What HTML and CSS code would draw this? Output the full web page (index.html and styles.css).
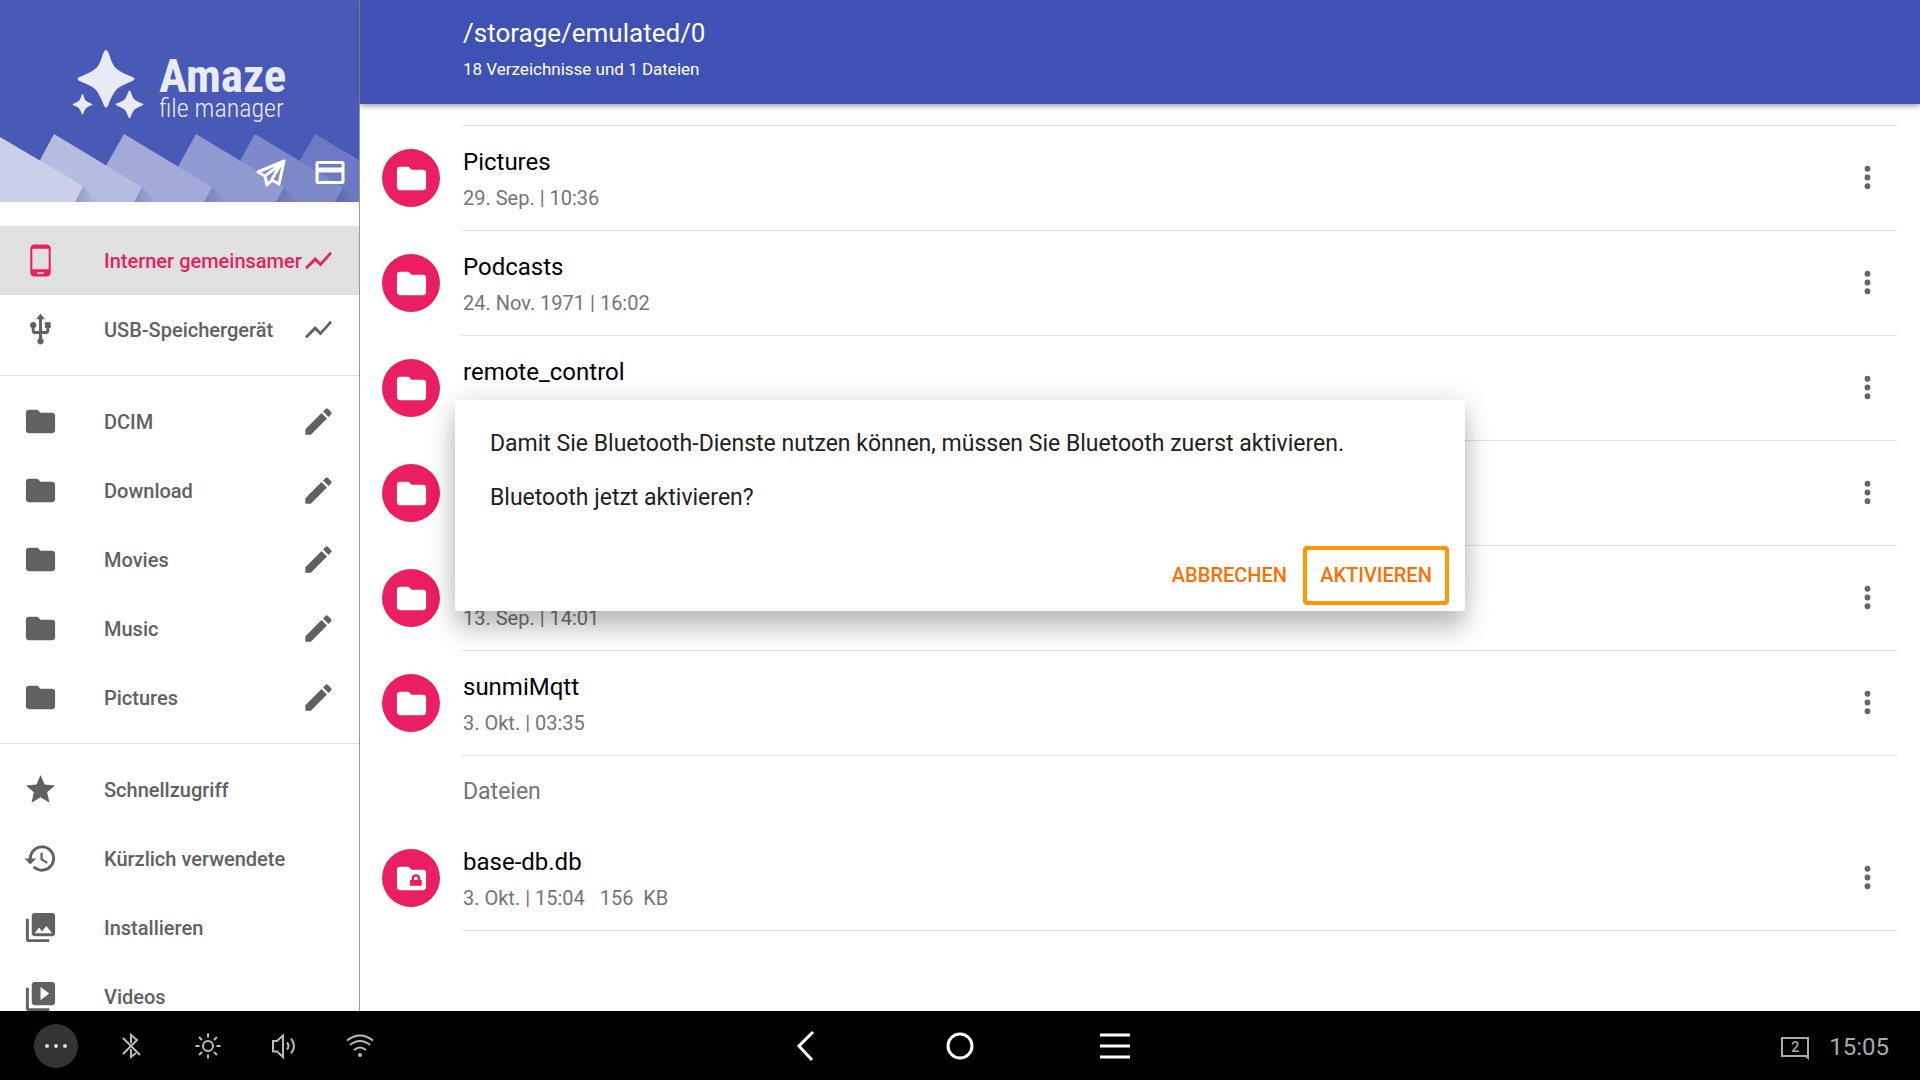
FILE: index.html
```html
<!DOCTYPE html>
<html lang="de">
<head>
  <meta charset="UTF-8">
  <meta name="viewport" content="width=device-width, initial-scale=1.0">
  <title>Amaze File Manager</title>
  <link rel="stylesheet" href="styles.css">
</head>
<body>
  <!-- Icons -->
  <svg class="sprite" aria-hidden="true">
    <symbol id="i-folder" viewBox="0 0 24 24"><path d="M10 4H4c-1.1 0-2 .9-2 2v12c0 1.1.9 2 2 2h16c1.1 0 2-.9 2-2V8c0-1.1-.9-2-2-2h-8z"/></symbol>
    <symbol id="i-folder-lock" viewBox="0 0 24 24"><path fill-rule="evenodd" d="M10 4H4c-1.1 0-2 .9-2 2v12c0 1.1.9 2 2 2h16c1.1 0 2-.9 2-2V8c0-1.1-.9-2-2-2h-8zM11 17v-4h1v-1a3 3 0 0 1 6 0v1h1v4zM13.800 13h2.400v-1.200a1.200 1.200 0 0 0-2.400 0z"/></symbol>
    <symbol id="i-phone" viewBox="0 0 24 24"><path d="M16.200 1H7.800C6.200 1 5 2.200 5 3.600v16.800C5 21.800 6.200 23 7.800 23h8.400c1.600 0 2.800-1.200 2.800-2.600V3.600C19 2.200 17.800 1 16.200 1zm-2 20.200H9.800V20h4.400zM17.600 18H6.400V4h11.200z"/></symbol>
    <symbol id="i-usb" viewBox="0 0 24 24"><path d="M15 7v4h1v2h-3V5h2l-3-4-3 4h2v8H8v-2.070c.7-.37 1.200-1.080 1.200-1.930 0-1.210-.99-2.200-2.200-2.200S4.800 7.790 4.800 9c0 .85.5 1.560 1.200 1.930V13c0 1.110.89 2 2 2h3v3.050c-.71.370-1.200 1.100-1.200 1.950 0 1.220.99 2.200 2.200 2.200s2.200-.98 2.200-2.200c0-.85-.49-1.580-1.200-1.950V15h3c1.110 0 2-.89 2-2v-2h1V7z"/></symbol>
    <symbol id="i-chart" viewBox="-1 -1 26 26"><path d="M3.500 18.490l6-6.010 4 4L22 6.920l-1.410-1.410-7.090 7.970-4-4L2 16.990z"/></symbol>
    <symbol id="i-pencil" viewBox="0 0 24 24"><path d="M3 17.250V21h3.750L17.810 9.940l-3.750-3.750zM20.710 7.040a1 1 0 0 0 0-1.410l-2.340-2.340a1 1 0 0 0-1.410 0l-1.830 1.830 3.750 3.750z"/></symbol>
    <symbol id="i-star" viewBox="0 0 24 24"><path d="M12 17.270 18.180 21l-1.640-7.030L22 9.240l-7.190-.61L12 2 9.190 8.630 2 9.240l5.460 4.730L5.820 21z"/></symbol>
    <symbol id="i-history" viewBox="0 0 24 24"><path d="M13 3a9 9 0 0 0-9 9H1l3.890 3.890.07.140L9 12H6a7 7 0 1 1 2.060 4.940l-1.420 1.420A9 9 0 1 0 13 3zm-1 5v5l4.280 2.540.72-1.210-3.500-2.080V8z"/></symbol>
    <symbol id="i-images" viewBox="0 0 24 24"><path d="M22 16V4c0-1.100-.9-2-2-2H8c-1.100 0-2 .9-2 2v12c0 1.100.9 2 2 2h12c1.100 0 2-.9 2-2zm-11-4 2.030 2.710L16 11l4 5H8zM2 6v14c0 1.100.9 2 2 2h14v-2H4V6z"/></symbol>
    <symbol id="i-videos" viewBox="0 0 24 24"><path d="M4 6H2v14c0 1.100.9 2 2 2h14v-2H4zm16-4H8c-1.100 0-2 .9-2 2v12c0 1.100.9 2 2 2h12c1.100 0 2-.9 2-2V4c0-1.100-.9-2-2-2zm-8 12.500v-9l6 4.500z"/></symbol>
    <symbol id="i-dots" viewBox="0 0 24 24"><path d="M12 8a2 2 0 1 0 0-4 2 2 0 0 0 0 4zm0 2a2 2 0 1 0 0 4 2 2 0 0 0 0-4zm0 6a2 2 0 1 0 0 4 2 2 0 0 0 0-4z"/></symbol>
    <symbol id="i-spark" viewBox="-30 -30 60 60"><path d="M0-29C2-29 3-25 4-22 6-16 8-12 11-10 14-7 20-5 24-3 30-1 30 1 24 3 20 5 14 7 11 10 8 13 5 19 3 24 1 30-1 30-3 24-5 19-8 13-11 10-14 7-20 5-24 3-30 1-30-1-24-3-20-5-14-7-11-10-8-12-6-16-4-22-3-25-2-29 0-29Z"/></symbol>
  </svg>

  <div class="app">
    <aside class="drawer">
      <div class="banner">
        <svg class="banner-art" viewBox="0 0 359 202" preserveAspectRatio="xMidYMax slice" aria-hidden="true">
          <defs>
            <linearGradient id="fold" x1="0" y1="0" x2="1" y2="0">
              <stop offset="0" stop-color="#2b3568" stop-opacity=".25"/>
              <stop offset="1" stop-color="#2b3568" stop-opacity="0"/>
            </linearGradient>
          </defs>
          <path fill="#6d79c2" d="M315 134 359 160V202H276L300 160Z"/>
          <path fill="url(#fold)" d="M343 187 356 202H335Z"/>
          <path fill="#7e89ca" d="M255 134 343 187 335 202H217L241 159Z"/>
          <path fill="url(#fold)" d="M284 187 298 202H276Z"/>
          <path fill="#909ad1" d="M196 134 284 187 276 202H158L179 165Z"/>
          <path fill="url(#fold)" d="M212 187 226 202H204Z"/>
          <path fill="#a1aad9" d="M124 134 212 187 204 202H86L107 164Z"/>
          <path fill="url(#fold)" d="M142 187 156 202H134Z"/>
          <path fill="#b4bce1" d="M54 134 142 187 134 202H16L40 160Z"/>
          <path fill="url(#fold)" d="M83 186 97 202H75Z"/>
          <path fill="#cacfea" d="M0 137 83 186 75 202H0Z"/>
        </svg>
        <div class="brand">
          <svg class="brand-logo" viewBox="0 0 72 70" aria-hidden="true">
            <use href="#i-spark" x="4" y="-1" width="60" height="60"/>
            <use href="#i-spark" x="0" y="44" width="21" height="21"/>
            <use href="#i-spark" x="43" y="40" width="29" height="29"/>
          </svg>
          <div class="brand-text">
            <span class="brand-name">Amaze</span>
            <span class="brand-sub">file manager</span>
          </div>
        </div>
        <div class="banner-actions">
          <button type="button" aria-label="Telegram">
            <svg viewBox="0 0 30 30" fill="none" stroke="#fff" stroke-width="3" stroke-linejoin="round"><path d="M28 3 2 14l7 4 2 9 5-5 7 4zM9 18 25 6 16 21"/></svg>
          </button>
          <button type="button" aria-label="Spenden">
            <svg viewBox="0 0 30 30" fill="none" stroke="#fff" stroke-width="3"><rect x="2" y="4.500" width="26" height="20" rx="1"/><path stroke-width="5" d="M2 12h26"/></svg>
          </button>
        </div>
      </div>

      <nav class="menu">
        <ul>
          <li class="active">
            <a href="#"><svg class="icon"><use href="#i-phone"/></svg><span>Interner gemeinsamer</span></a>
            <button type="button" aria-label="Speicheranalyse"><svg class="icon"><use href="#i-chart"/></svg></button>
          </li>
          <li>
            <a href="#"><svg class="icon"><use href="#i-usb"/></svg><span>USB-Speichergerät</span></a>
            <button type="button" aria-label="Speicheranalyse"><svg class="icon"><use href="#i-chart"/></svg></button>
          </li>
        </ul>
        <ul>
          <li>
            <a href="#"><svg class="icon"><use href="#i-folder"/></svg><span>DCIM</span></a>
            <button type="button" aria-label="Bearbeiten"><svg class="icon"><use href="#i-pencil"/></svg></button>
          </li>
          <li>
            <a href="#"><svg class="icon"><use href="#i-folder"/></svg><span>Download</span></a>
            <button type="button" aria-label="Bearbeiten"><svg class="icon"><use href="#i-pencil"/></svg></button>
          </li>
          <li>
            <a href="#"><svg class="icon"><use href="#i-folder"/></svg><span>Movies</span></a>
            <button type="button" aria-label="Bearbeiten"><svg class="icon"><use href="#i-pencil"/></svg></button>
          </li>
          <li>
            <a href="#"><svg class="icon"><use href="#i-folder"/></svg><span>Music</span></a>
            <button type="button" aria-label="Bearbeiten"><svg class="icon"><use href="#i-pencil"/></svg></button>
          </li>
          <li>
            <a href="#"><svg class="icon"><use href="#i-folder"/></svg><span>Pictures</span></a>
            <button type="button" aria-label="Bearbeiten"><svg class="icon"><use href="#i-pencil"/></svg></button>
          </li>
        </ul>
        <ul>
          <li><a href="#"><svg class="icon"><use href="#i-star"/></svg><span>Schnellzugriff</span></a></li>
          <li><a href="#"><svg class="icon"><use href="#i-history"/></svg><span>Kürzlich verwendete</span></a></li>
          <li><a href="#"><svg class="icon"><use href="#i-images"/></svg><span>Installieren</span></a></li>
          <li><a href="#"><svg class="icon"><use href="#i-videos"/></svg><span>Videos</span></a></li>
        </ul>
      </nav>
    </aside>

    <main class="content">
      <header class="toolbar">
        <h1>/storage/emulated/0</h1>
        <p>18 Verzeichnisse und 1 Dateien</p>
      </header>

      <div class="files">
        <ul class="first">
          <li>
            <span class="badge"><svg class="icon"><use href="#i-folder"/></svg></span>
            <div class="entry">
              <div class="entry-text"><span class="name">Pictures</span><span class="meta">29. Sep. | 10:36</span></div>
              <button type="button" aria-label="Mehr"><svg class="icon"><use href="#i-dots"/></svg></button>
            </div>
          </li>
          <li>
            <span class="badge"><svg class="icon"><use href="#i-folder"/></svg></span>
            <div class="entry">
              <div class="entry-text"><span class="name">Podcasts</span><span class="meta">24. Nov. 1971 | 16:02</span></div>
              <button type="button" aria-label="Mehr"><svg class="icon"><use href="#i-dots"/></svg></button>
            </div>
          </li>
          <li>
            <span class="badge"><svg class="icon"><use href="#i-folder"/></svg></span>
            <div class="entry">
              <div class="entry-text"><span class="name">remote_control</span><span class="meta">&nbsp;</span></div>
              <button type="button" aria-label="Mehr"><svg class="icon"><use href="#i-dots"/></svg></button>
            </div>
          </li>
          <li>
            <span class="badge"><svg class="icon"><use href="#i-folder"/></svg></span>
            <div class="entry">
              <div class="entry-text"><span class="name">&nbsp;</span><span class="meta">&nbsp;</span></div>
              <button type="button" aria-label="Mehr"><svg class="icon"><use href="#i-dots"/></svg></button>
            </div>
          </li>
          <li>
            <span class="badge"><svg class="icon"><use href="#i-folder"/></svg></span>
            <div class="entry">
              <div class="entry-text"><span class="name">&nbsp;</span><span class="meta">13. Sep. | 14:01</span></div>
              <button type="button" aria-label="Mehr"><svg class="icon"><use href="#i-dots"/></svg></button>
            </div>
          </li>
          <li>
            <span class="badge"><svg class="icon"><use href="#i-folder"/></svg></span>
            <div class="entry">
              <div class="entry-text"><span class="name">sunmiMqtt</span><span class="meta">3. Okt. | 03:35</span></div>
              <button type="button" aria-label="Mehr"><svg class="icon"><use href="#i-dots"/></svg></button>
            </div>
          </li>
        </ul>
        <h2>Dateien</h2>
        <ul>
          <li>
            <span class="badge"><svg class="icon"><use href="#i-folder-lock"/></svg></span>
            <div class="entry">
              <div class="entry-text"><span class="name">base-db.db</span><span class="meta">3. Okt. | 15:04 &nbsp; 156 &nbsp;KB</span></div>
              <button type="button" aria-label="Mehr"><svg class="icon"><use href="#i-dots"/></svg></button>
            </div>
          </li>
        </ul>
      </div>
    </main>

    <div class="overlay">
      <div class="dialog" role="dialog" aria-modal="true">
        <p>Damit Sie Bluetooth-Dienste nutzen können, müssen Sie Bluetooth zuerst aktivieren.</p>
        <p>Bluetooth jetzt aktivieren?</p>
        <div class="dialog-actions">
          <button type="button">ABBRECHEN</button>
          <button type="button" class="focused">AKTIVIEREN</button>
        </div>
      </div>
    </div>
  </div>

  <footer class="navbar">
    <div class="quick">
      <button type="button" aria-label="Mehr">
        <span class="more"><svg viewBox="0 0 28 28" fill="#ddd"><circle cx="5" cy="14" r="2"/><circle cx="14" cy="14" r="2"/><circle cx="23" cy="14" r="2"/></svg></span>
      </button>
      <button type="button" aria-label="Bluetooth">
        <svg viewBox="0 0 28 28"><path d="M5 6 22 23M5 22 19 8l-6-5v8M13 17v8l5-4"/></svg>
      </button>
      <button type="button" aria-label="Helligkeit">
        <svg viewBox="0 0 28 28"><circle cx="14" cy="14" r="5"/><path d="M14 1.500v4M14 22.500v4M1.500 14h4M22.500 14h4M5 5l3 3M20 20l3 3M5 23l3-3M20 8l3-3"/></svg>
      </button>
      <button type="button" aria-label="Lautstärke">
        <svg viewBox="0 0 28 28"><path d="M3 9h4l6-5.500v21.500L7 19.500H3zM17 10.500q3 3.500 0 7M21 6.500q6 7.500 0 15"/></svg>
      </button>
      <button type="button" aria-label="WLAN">
        <svg viewBox="0 0 28 28"><path d="M1 8.500q13-10 26 0M4 13q10-8 20 0M8 18q6-5 12 0"/><circle cx="14" cy="23" r="1" fill="#bbb"/></svg>
      </button>
    </div>
    <div class="system">
      <button type="button" aria-label="Zurück">
        <svg viewBox="0 0 32 32"><path d="M24 2 10 16l13 14"/></svg>
      </button>
      <button type="button" aria-label="Startseite">
        <svg viewBox="0 0 32 32"><circle cx="16" cy="16" r="12"/></svg>
      </button>
      <button type="button" aria-label="Letzte Apps">
        <svg viewBox="0 0 32 32"><path d="M1 5h30M1 16h30M1 27h30"/></svg>
      </button>
    </div>
    <div class="status">
      <span class="screen">2</span>
      <time>15:05</time>
    </div>
  </footer>
</body>
</html>
```

FILE: styles.css
```css
* {
  box-sizing: border-box;
}

body {
  margin: 0;
  height: 100vh;
  display: flex;
  flex-direction: column;
  overflow: hidden;
  background: #fff;
  font-family: Roboto, "Liberation Sans", sans-serif;
  color: #000;
}

h1,
h2,
p,
ul {
  margin: 0;
  padding: 0;
  font-weight: 400;
}

ul {
  list-style: none;
}

a {
  color: inherit;
  text-decoration: none;
}

button {
  display: flex;
  align-items: center;
  justify-content: center;
  padding: 0;
  border: 0;
  background: none;
  color: inherit;
  font: inherit;
  cursor: pointer;
}

.sprite {
  position: absolute;
  width: 0;
  height: 0;
}

.icon {
  display: block;
  flex: none;
  width: 35px;
  height: 35px;
  fill: currentColor;
}

.app {
  position: relative;
  flex: 1;
  min-height: 0;
  display: flex;
}

/* Drawer */
.drawer {
  flex: none;
  width: 360px;
  display: flex;
  flex-direction: column;
  overflow: hidden;
  border-right: 1px solid #999;
}

.banner {
  position: relative;
  flex: none;
  height: 202px;
  padding: 50px 14px 14px 72px;
  display: flex;
  flex-direction: column;
  justify-content: space-between;
  background: #4859b6;
}

.banner-art {
  position: absolute;
  inset: 0;
  width: 100%;
  height: 100%;
}

.brand {
  position: relative;
  display: flex;
  gap: 15px;
  color: #e8eaf6;
}

.brand-logo {
  width: 72px;
  height: 70px;
  fill: currentColor;
}

.brand-text {
  display: flex;
  flex-direction: column;
  padding-top: 4px;
  font-family: "Roboto Condensed", Roboto, sans-serif;
}

.brand-name {
  font-size: 47px;
  font-weight: 700;
  line-height: 44px;
}

.brand-sub {
  font-size: 26px;
  font-weight: 300;
  line-height: 20px;
}

.banner-actions {
  position: relative;
  display: flex;
  justify-content: flex-end;
  gap: 29px;
}

.banner-actions svg {
  width: 30px;
  height: 30px;
}

.menu {
  padding-top: 24px;
  color: #616161;
}

.menu ul + ul {
  margin-top: 11px;
  padding-top: 11px;
  border-top: 1px solid #e0e0e0;
}

.menu li {
  display: flex;
  align-items: center;
  height: 69px;
  padding: 0 23px;
  font-size: 20px;
  font-weight: 500;
  white-space: nowrap;
}

.menu a {
  flex: 1;
  min-width: 0;
  display: flex;
  align-items: center;
  gap: 46px;
}

.menu .active {
  background: #e0e0e0;
  color: #e91e63;
}

/* Content */
.content {
  flex: 1;
  min-width: 0;
  display: flex;
  flex-direction: column;
}

.toolbar {
  flex: none;
  padding: 15px 24px 17px 103px;
  background: #3f51b5;
  box-shadow: 0 1px 6px rgba(0, 0, 0, 0.5);
  color: #fff;
  line-height: 36px;
}

.toolbar h1 {
  font-size: 26px;
}

.toolbar p {
  font-size: 17px;
}

.files {
  padding: 21px 23px 0 22px;
}

.first::before {
  content: "";
  display: block;
  height: 1px;
  margin-left: 80px;
  background: #e0e0e0;
}

.files li {
  display: flex;
  align-items: center;
  gap: 22px;
}

.badge {
  flex: none;
  display: flex;
  align-items: center;
  justify-content: center;
  width: 58px;
  height: 58px;
  margin-bottom: 1px;
  border-radius: 50%;
  background: #e91e63;
  color: #fff;
}

.entry {
  flex: 1;
  display: flex;
  align-items: center;
  justify-content: space-between;
  padding-right: 12px;
  border-bottom: 1px solid #e0e0e0;
}

.entry-text {
  display: flex;
  flex-direction: column;
  padding: 18px 0 14px 1px;
  line-height: 36px;
}

.entry button {
  margin-bottom: 1px;
  color: #666;
}

.name {
  font-size: 24px;
}

.meta {
  font-size: 20px;
  color: #757575;
}

.files h2 {
  padding: 2px 0 0 81px;
  font-size: 23px;
  line-height: 68px;
  color: #757575;
}

/* Dialog */
.overlay {
  position: absolute;
  inset: 0;
  display: flex;
  align-items: center;
  justify-content: center;
}

.dialog {
  width: 1010px;
  max-width: 90%;
  padding: 30px 16px 6px 35px;
  border-radius: 3px;
  background: #fff;
  box-shadow: 0 20px 24px rgba(0, 0, 0, 0.19), 0 2px 28px rgba(0, 0, 0, 0.16);
  color: #212121;
  font-size: 23px;
  line-height: 27px;
}

.dialog p + p {
  margin-top: 27px;
}

.dialog-actions {
  display: flex;
  justify-content: flex-end;
  margin-top: 35px;
}

.dialog-actions button {
  height: 59px;
  min-width: 146px;
  padding: 0 12px;
  border: 4px solid transparent;
  border-radius: 4px;
  color: #ff6d00;
  font-size: 20px;
  font-weight: 500;
}

.dialog-actions .focused {
  border-color: #ff9800;
}

/* Navigation bar */
.navbar {
  flex: none;
  display: grid;
  grid-template-columns: 1fr auto 1fr;
  align-items: center;
  height: 69px;
  background: #000;
}

.navbar svg {
  fill: none;
  stroke: #bbb;
  stroke-width: 2;
}

.quick {
  display: flex;
  padding-left: 18px;
}

.quick button {
  width: 76px;
  height: 69px;
}

.quick svg {
  width: 28px;
  height: 28px;
}

.quick .more {
  display: flex;
  align-items: center;
  justify-content: center;
  width: 44px;
  height: 44px;
  border-radius: 50%;
  background: #333;
}

.quick .more svg {
  fill: #ddd;
  stroke: none;
}

.system {
  display: flex;
}

.system button {
  width: 155px;
  height: 69px;
}

.system svg {
  width: 32px;
  height: 32px;
  stroke: #fff;
  stroke-width: 3;
}

.status {
  display: flex;
  align-items: center;
  justify-content: flex-end;
  gap: 20px;
  padding: 2px 31px 0 0;
  color: #aaa;
  font-size: 24px;
}

.screen {
  position: relative;
  width: 28px;
  height: 20px;
  border: 2px solid #aaa;
  font-size: 14px;
  font-weight: 500;
  line-height: 17px;
  text-align: center;
}

/* small tail under the screen outline */
.screen::after {
  content: "";
  position: absolute;
  right: -2px;
  bottom: -5px;
  border-top: 4px solid #aaa;
  border-left: 5px solid transparent;
}
```
